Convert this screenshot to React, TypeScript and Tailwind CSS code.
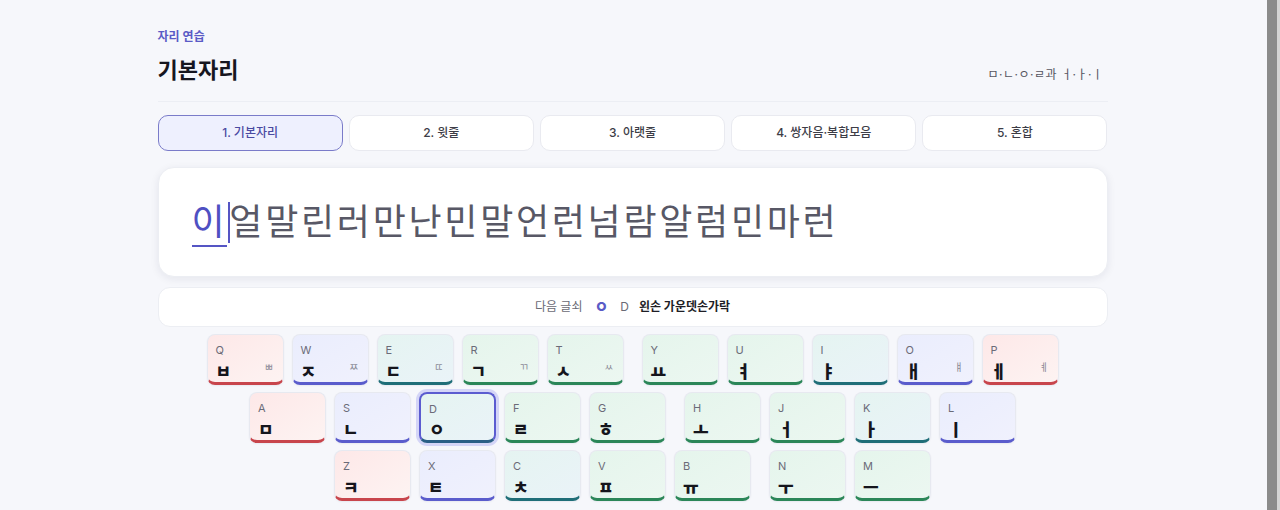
import React from "react";

type Finger = "pinky" | "ring" | "middle" | "index";

type KeyDef = { en: string; ko: string; shift?: string; f: Finger };

const fingerCls: Record<Finger, string> = {
  pinky: "bg-linear-to-br from-[#fde8e8] to-[#fdf3f2] border-b-[#c8454c]",
  ring: "bg-linear-to-br from-[#eaedfd] to-[#f0f1fd] border-b-[#5a5ccc]",
  middle: "bg-linear-to-br from-[#e5f4f1] to-[#eaf3f8] border-b-[#1f6e78]",
  index: "bg-linear-to-br from-[#e5f5ec] to-[#ecf7f1] border-b-[#2b8658]",
};

const rows: { left: KeyDef[]; right: KeyDef[] }[] = [
  {
    left: [
      { en: "Q", ko: "ㅂ", shift: "ㅃ", f: "pinky" },
      { en: "W", ko: "ㅈ", shift: "ㅉ", f: "ring" },
      { en: "E", ko: "ㄷ", shift: "ㄸ", f: "middle" },
      { en: "R", ko: "ㄱ", shift: "ㄲ", f: "index" },
      { en: "T", ko: "ㅅ", shift: "ㅆ", f: "index" },
    ],
    right: [
      { en: "Y", ko: "ㅛ", f: "index" },
      { en: "U", ko: "ㅕ", f: "index" },
      { en: "I", ko: "ㅑ", f: "middle" },
      { en: "O", ko: "ㅐ", shift: "ㅒ", f: "ring" },
      { en: "P", ko: "ㅔ", shift: "ㅖ", f: "pinky" },
    ],
  },
  {
    left: [
      { en: "A", ko: "ㅁ", f: "pinky" },
      { en: "S", ko: "ㄴ", f: "ring" },
      { en: "D", ko: "ㅇ", f: "middle" },
      { en: "F", ko: "ㄹ", f: "index" },
      { en: "G", ko: "ㅎ", f: "index" },
    ],
    right: [
      { en: "H", ko: "ㅗ", f: "index" },
      { en: "J", ko: "ㅓ", f: "index" },
      { en: "K", ko: "ㅏ", f: "middle" },
      { en: "L", ko: "ㅣ", f: "ring" },
    ],
  },
  {
    left: [
      { en: "Z", ko: "ㅋ", f: "pinky" },
      { en: "X", ko: "ㅌ", f: "ring" },
      { en: "C", ko: "ㅊ", f: "middle" },
      { en: "V", ko: "ㅍ", f: "index" },
      { en: "B", ko: "ㅠ", f: "index" },
    ],
    right: [
      { en: "N", ko: "ㅜ", f: "index" },
      { en: "M", ko: "ㅡ", f: "index" },
    ],
  },
];

function Key({ k }: { k: KeyDef }) {
  const active = k.en === "D";
  return (
    <div
      className={
        "flex h-[51px] w-[77px] flex-col justify-between rounded-[8px] pb-[2px] pl-[8px] pr-[9px] pt-[8px] shadow-[0_1px_2px_rgba(20,20,60,0.06)] " +
        fingerCls[k.f] +
        (active
          ? " border-2 border-[#5b5cd0] border-b-[3px] border-b-[#2a5f86] ring-[3px] ring-[#d4d5f7]"
          : " border border-[#e7e9f0] border-b-[3px]")
      }
    >
      <div className="text-[11px] leading-[14px] text-[#6b6b78]">{k.en}</div>
      <div className="flex items-end justify-between">
        <span className="text-[17px] font-black leading-[16px] text-[#15151c]">{k.ko}</span>
        {k.shift && (
          <span className="mb-[7px] text-[10px] leading-[11px] text-[#8a8a96]">{k.shift}</span>
        )}
      </div>
    </div>
  );
}

const sentence = "얼말린러만난민말언런넘람알럼민마런".split("");

const tabs = ["1. 기본자리", "2. 윗줄", "3. 아랫줄", "4. 쌍자음·복합모음", "5. 혼합"];

export default function App() {
  return (
    <div
      className="flex h-[510px] w-full overflow-hidden bg-[#f6f7fb]"
      style={{ fontFamily: 'Inter, "Noto Sans CJK KR", "Noto Sans", sans-serif' }}
    >
      <main className="min-w-0 flex-1">
        <div className="mx-auto w-[950px] pt-[29px]">
          <div className="flex items-end justify-between border-b border-[#eceef4] pb-[17px]">
            <div>
              <div className="text-[12px] font-semibold leading-4 text-[#5a5bc6]">자리 연습</div>
              <h1 className="mt-[11px] text-[22px] font-bold leading-[28px] text-[#16161f]">기본자리</h1>
            </div>
            <div className="mb-[1px] mr-[4px] text-[12px] leading-4 tracking-[0.5px] text-[#55555f]">
              ㅁ·ㄴ·ㅇ·ㄹ과 ㅓ·ㅏ·ㅣ
            </div>
          </div>

          <div className="mt-[13px] grid grid-cols-5 gap-[6px]">
            {tabs.map((t, i) => (
              <div
                key={t}
                className={
                  "flex h-[36px] items-center justify-center rounded-[10px] border text-[12px] font-medium " +
                  (i === 0
                    ? "border-[#7a7bc9] bg-[#eef0fe] text-[#4a4aa2]"
                    : "border-[#e9eaf0] bg-white text-[#3d3d47]")
                }
              >
                {t}
              </div>
            ))}
          </div>

          <div className="mt-[16px] flex h-[110px] items-center rounded-[16px] border border-[#eceef3] bg-white pl-[33px] shadow-[0_2px_8px_rgba(20,20,60,0.08)]">
            <div className="flex items-center text-[36px] leading-[46px] tracking-[2.7px] text-[#585866]">
              <span className="relative mr-[2px] text-[#4f50c2]">
                <span className="border-b-2 border-[#5555c4] pb-[1px]">이</span>
                <span className="absolute right-[-3px] top-[3px] h-[41px] w-[2px] bg-[#5555c4]" />
              </span>
              {sentence.map((c, i) => (
                <span key={i}>{c}</span>
              ))}
            </div>
          </div>

          <div className="mt-[10px] flex h-[40px] items-center justify-center gap-[12px] rounded-[12px] border border-[#eceef3] bg-white text-[12px]">
            <span className="text-[#6a6a75]">다음 글쇠</span>
            <span className="text-[15px] font-extrabold leading-4 text-[#5a5bc6]">ㅇ</span>
            <span className="text-[#6a6a75]">D</span>
            <span className="-ml-[2px] font-bold text-[#1e1e26]">왼손 가운뎃손가락</span>
          </div>

          <div className="mt-[7px] flex flex-col items-center gap-[7px]">
            {rows.map((r, ri) => (
              <div key={ri} className="flex gap-[18px]">
                <div className="flex gap-[8px]">
                  {r.left.map((k) => (
                    <Key key={k.en} k={k} />
                  ))}
                </div>
                <div className="flex gap-[8px]">
                  {r.right.map((k) => (
                    <Key key={k.en} k={k} />
                  ))}
                </div>
              </div>
            ))}
          </div>
        </div>
      </main>
      <div className="flex w-[15px] shrink-0 bg-[#f6f7fb]">
        <div className="ml-[2px] h-full w-[10px] bg-[#8b8b8b]" />
        <div className="h-full w-[3px] bg-[#d4d4d4]" />
      </div>
    </div>
  );
}
